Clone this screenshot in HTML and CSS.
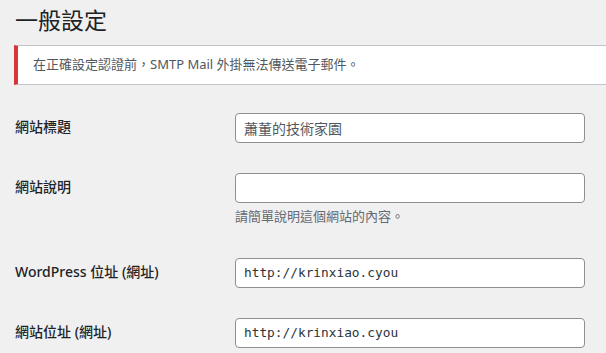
FILE: index.html
```html
<!DOCTYPE html>
<html lang="zh-TW">
<head>
	<meta charset="UTF-8">
	<title>一般設定</title>
	<link rel="stylesheet" href="styles.css">
</head>
<body>
	<div class="wrap">
		<h1 class="page-title">一般設定</h1>
		<div class="notice notice-error">
			<p>在正確設定認證前，SMTP Mail 外掛無法傳送電子郵件。</p>
		</div>
		<table class="form-table">
			<tr>
				<th>網站標題</th>
				<td><input type="text" class="regular-text" value="蕭董的技術家園"></td>
			</tr>
			<tr>
				<th>網站說明</th>
				<td>
					<input type="text" class="regular-text" value="">
					<p class="description">請簡單說明這個網站的內容。</p>
				</td>
			</tr>
			<tr>
				<th>WordPress 位址 (網址)</th>
				<td><input type="text" class="regular-text code" value="http://krinxiao.cyou"></td>
			</tr>
			<tr>
				<th>網站位址 (網址)</th>
				<td><input type="text" class="regular-text code" value="http://krinxiao.cyou"></td>
			</tr>
		</table>
	</div>
</body>
</html>
```

FILE: styles.css
```css
*{
	margin: 0;
	padding: 0;
	box-sizing: border-box;
}
html, body{
	background: #f0f0f1;
	overflow: hidden;
}
body{
	font-family: "Noto Sans", "Noto Sans CJK TC", sans-serif;
	font-size: 13px;
	line-height: 1.4;
	color: #3c434a;
}
.wrap{
	padding: 0 0 0 14px;
}
.page-title{
	font-size: 23px;
	font-weight: 400;
	line-height: 1.3;
	color: #1d2327;
	padding: 6px 0 4px 1px;
}
.notice{
	background: #fff;
	border: 1px solid #c3c4c7;
	border-left: 4px solid #d63638;
	border-right: 0;
	padding: 1px 15px;
	margin: 5px 0 13px;
}
.notice p{
	margin: 0.5em 0;
	padding: 2px 0;
	line-height: 1.5;
	color: #50575e;
}
.form-table{
	border-collapse: collapse;
	margin-left: 1px;
}
.form-table th{
	width: 220px;
	text-align: left;
	vertical-align: top;
	padding: 20px 10px 20px 0;
	font-size: 14px;
	font-weight: 500;
	line-height: 1.3;
	color: #1d2327;
}
.form-table td{
	padding: 15px 10px 15px 0;
	vertical-align: middle;
	line-height: 1.3;
}
.form-table tr:nth-child(2) td{
	padding-bottom: 16px;
}
.regular-text{
	display: block;
	width: 350px;
	height: 30px;
	padding: 0 8px;
	border: 1px solid #8c8f94;
	border-radius: 4px;
	background: #fff;
	font-family: "Noto Sans", "Noto Sans CJK TC", sans-serif;
	font-size: 14px;
	color: #50575e;
	outline: none;
}
.regular-text.code{
	font-family: "DejaVu Sans Mono", monospace;
	font-size: 12.8px;
	color: #2c3338;
}
.description{
	margin-top: 4px;
	font-size: 13px;
	line-height: 1.5;
	color: #646970;
}
```
